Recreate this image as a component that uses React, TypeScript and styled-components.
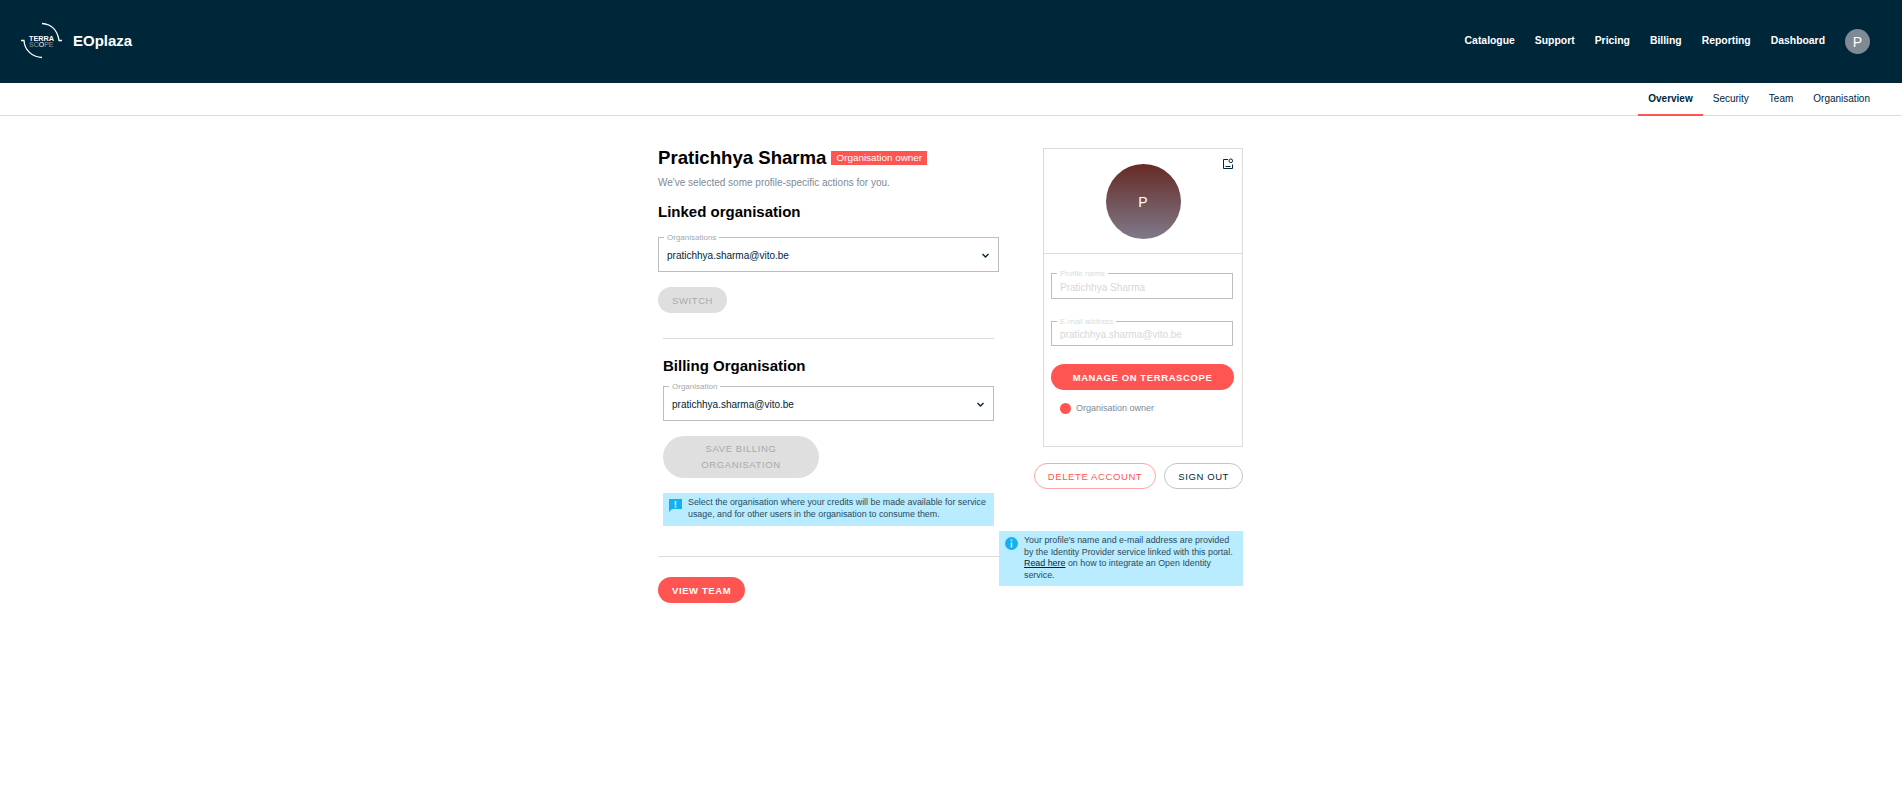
import styled, { createGlobalStyle } from 'styled-components'

const GlobalStyle = createGlobalStyle`
	* {
		box-sizing: border-box;
	}

	body {
		margin: 0;
		background: #fff;
		font-family: 'Liberation Sans', Arial, sans-serif;
		color: #00263a;
	}
`

const Header = styled.header`
	display: flex;
	justify-content: space-between;
	align-items: center;
	height: 83px;
	padding: 0 32px 0 20px;
	background: #00263a;
	color: #fff;
`

const Brand = styled.div`
	display: flex;
	align-items: center;
	gap: 7px;
`

const BrandName = styled.span`
	margin-bottom: 2px;
	font-size: 15px;
	font-weight: 700;
`

const MainNav = styled.nav`
	display: flex;
	align-items: center;
	gap: 20px;
`

const NavLink = styled.a`
	margin-bottom: 2px;
	font-size: 10.4px;
	font-weight: 700;
`

const UserBadge = styled.div`
	display: flex;
	justify-content: center;
	align-items: center;
	width: 25px;
	height: 25px;
	border-radius: 50%;
	background: #808a94;
	font-size: 14px;
`

const SubNav = styled.nav`
	display: flex;
	justify-content: flex-end;
	height: 33px;
	padding-right: 22px;
	border-bottom: 1px solid #dcdcdc;
`

const Tab = styled.a<{ $active?: boolean }>`
	display: flex;
	align-items: center;
	height: 33px;
	padding: 0 10px;
	font-size: 10px;
	font-weight: ${({ $active }) => ($active ? 700 : 400)};
	border-bottom: 2px solid ${({ $active }) => ($active ? '#ff5552' : 'transparent')};
`

const Main = styled.main`
	display: flex;
	justify-content: center;
	align-items: flex-start;
	padding: 32px 1px 0 0;
`

const LeftColumn = styled.section`
	width: 341px;
`

const RightColumn = styled.aside`
	display: flex;
	flex-direction: column;
	align-items: flex-end;
	width: 244px;
`

const TitleRow = styled.div`
	display: flex;
	align-items: center;
	gap: 5px;
	height: 20px;
`

const Title = styled.h1`
	margin: 0;
	font-size: 18.6px;
	font-weight: 700;
	color: #000;
`

const RoleBadge = styled.span`
	padding: 1px 5px;
	background: #ff5552;
	color: #fff;
	font-size: 9.9px;
	line-height: 12px;
`

const Lead = styled.p`
	margin: 9px 0 0;
	font-size: 10px;
	line-height: 12px;
	color: #808a94;
`

const SectionTitle = styled.h2<{ $top: number }>`
	margin: ${({ $top }) => $top}px 0 0;
	font-size: 15px;
	line-height: 18px;
	font-weight: 700;
	color: #000;
`

const Inset = styled.div`
	padding: 0 5px;
`

const Field = styled.fieldset<{ $top: number; $height: number; $disabled?: boolean }>`
	display: flex;
	align-items: center;
	justify-content: space-between;
	height: ${({ $height }) => $height}px;
	margin: ${({ $top }) => $top}px 0 0;
	padding: 0 8px;
	border: 1px solid #bdbdbd;
	font-size: 10px;
	color: ${({ $disabled }) => ($disabled ? '#d8d8d8' : '#00263a')};
`

const FieldLegend = styled.legend<{ $disabled?: boolean }>`
	padding: 0 3px;
	margin-left: -3px;
	font-size: 8px;
	line-height: 5px;
	color: ${({ $disabled }) => ($disabled ? '#dcdcdc' : '#a3a9af')};
`

const Chevron = styled.svg`
	width: 7px;
	height: 5px;
	margin-right: 1px;
	fill: none;
	stroke: #00263a;
	stroke-width: 1.4;
`

const PillButton = styled.button<{ $variant: 'primary' | 'disabled' | 'danger' | 'outline'; $top?: number }>`
	display: block;
	min-height: 26px;
	margin-top: ${({ $top }) => $top ?? 0}px;
	padding: 0 ${({ $variant }) => ($variant === 'danger' || $variant === 'outline' ? 13 : 14)}px;
	border-radius: 13px;
	font-family: inherit;
	font-size: 9.5px;
	font-weight: ${({ $variant }) => ($variant === 'primary' ? 700 : 400)};
	letter-spacing: 0.6px;
	text-transform: uppercase;
	background: ${({ $variant }) =>
		$variant === 'primary' ? '#ff5552' : $variant === 'disabled' ? '#dfdfdf' : '#fff'};
	color: ${({ $variant }) =>
		$variant === 'primary'
			? '#fff'
			: $variant === 'disabled'
				? '#a9a9a9'
				: $variant === 'danger'
					? '#ff5552'
					: '#00263a'};
	border: ${({ $variant }) =>
		$variant === 'danger'
			? '1px solid #ffa5a3'
			: $variant === 'outline'
				? '1px solid #c4c4c4'
				: 'none'};
`

const SaveButton = styled(PillButton)`
	width: 156px;
	height: 42px;
	border-radius: 21px;
	line-height: 16px;
`

const Divider = styled.hr<{ $top: number }>`
	height: 1px;
	margin: ${({ $top }) => $top}px 0 0;
	border: 0;
	background: #dcdcdc;
`

const Note = styled.div<{ $top: number }>`
	display: flex;
	gap: 6px;
	margin-top: ${({ $top }) => $top}px;
	background: #b9ecff;
	font-size: 8.9px;
	line-height: 11.5px;
	color: #2b4a5c;
`

const BillingNote = styled(Note)`
	height: 33px;
	padding: 4px 3px 4px 6px;
`

const IdentityNote = styled(Note)`
	width: 244px;
	height: 55px;
	padding: 4px 5px 4px 6px;
`

const NoteIcon = styled.svg`
	flex: none;
	width: 13px;
	height: 13px;
	margin-top: 2px;
	fill: #16b0f0;
`

const NoteLink = styled.a`
	color: #00263a;
	text-decoration: underline;
`

const ProfileCard = styled.div`
	width: 200px;
	height: 299px;
	border: 1px solid #dcdcdc;
`

const AvatarArea = styled.div`
	position: relative;
	display: flex;
	justify-content: center;
	height: 105px;
	padding-top: 15px;
	border-bottom: 1px solid #dcdcdc;
`

const Avatar = styled.div`
	display: flex;
	justify-content: center;
	align-items: center;
	width: 75px;
	height: 75px;
	border-radius: 50%;
	background: linear-gradient(#662a26, #7f7a8a);
	color: #fff;
	font-size: 14px;
`

const UploadIcon = styled.svg`
	position: absolute;
	top: 9px;
	right: 8px;
	width: 11px;
	height: 11px;
	fill: none;
	stroke: #00263a;
`

const CardBody = styled.div`
	padding: 17px 9px 0 7px;
`

const WideButton = styled(PillButton)`
	width: 183px;
	margin-top: 18px;
`

const RoleLine = styled.div`
	display: flex;
	align-items: center;
	gap: 5px;
	margin: 13px 0 0 9px;
	font-size: 9px;
	line-height: 11px;
	color: #808a94;
`

const RoleDot = styled.span`
	width: 11px;
	height: 11px;
	border-radius: 50%;
	background: #ff5552;
`

const AccountActions = styled.div`
	display: flex;
	gap: 8px;
	margin-top: 16px;
`

function SelectField({ label, top }: { label: string; top: number }) {
	return (
		<Field $top={top} $height={37}>
			<FieldLegend>{label}</FieldLegend>
			pratichhya.sharma@vito.be
			<Chevron viewBox="0 0 7 5">
				<path d="M.5 1l3 3 3-3" />
			</Chevron>
		</Field>
	)
}

function Logo() {
	return (
		<svg width="46" height="40" viewBox="0 0 46 40" fill="none">
			<path d="M22 1.5C31 2 37.5 8 39 18.5H42" stroke="#fff" strokeWidth="1.3" />
			<path d="M1 18.5H4C4.5 28 12 35 22 35.5" stroke="#fff" strokeWidth="1.3" />
			<text x="9" y="18.5" fill="#fff" fontSize="7.3" fontWeight="700" fontFamily="Liberation Sans">
				TERRA
			</text>
			<text x="9" y="25" fill="#8d9ca6" fontSize="7" fontFamily="Liberation Sans">
				SC<tspan fill="#fff">O</tspan>PE
			</text>
		</svg>
	)
}

export default function App() {
	return (
		<>
			<GlobalStyle />
			<Header>
				<Brand>
					<Logo />
					<BrandName>EOplaza</BrandName>
				</Brand>
				<MainNav>
					<NavLink>Catalogue</NavLink>
					<NavLink>Support</NavLink>
					<NavLink>Pricing</NavLink>
					<NavLink>Billing</NavLink>
					<NavLink>Reporting</NavLink>
					<NavLink>Dashboard</NavLink>
					<UserBadge>P</UserBadge>
				</MainNav>
			</Header>
			<SubNav>
				<Tab $active>Overview</Tab>
				<Tab>Security</Tab>
				<Tab>Team</Tab>
				<Tab>Organisation</Tab>
			</SubNav>
			<Main>
				<LeftColumn>
					<TitleRow>
						<Title>Pratichhya Sharma</Title>
						<RoleBadge>Organisation owner</RoleBadge>
					</TitleRow>
					<Lead>We've selected some profile-specific actions for you.</Lead>
					<SectionTitle $top={14}>Linked organisation</SectionTitle>
					<SelectField label="Organisations" top={14} />
					<PillButton $variant="disabled" $top={15}>
						Switch
					</PillButton>
					<Inset>
						<Divider $top={25} />
						<SectionTitle $top={18}>Billing Organisation</SectionTitle>
						<SelectField label="Organisation" top={9} />
						<SaveButton $variant="disabled" $top={15}>
							Save billing organisation
						</SaveButton>
						<BillingNote $top={15}>
							<NoteIcon viewBox="0 0 13 13">
								<path d="M0 0h13v10H3l-3 3zM5.7 2v4.4h1.6V2zm0 5.2v1.6h1.6V7.2z" fillRule="evenodd" />
							</NoteIcon>
							<span>
								Select the organisation where your credits will be made available for service usage, and
								for other users in the organisation to consume them.
							</span>
						</BillingNote>
					</Inset>
					<Divider $top={30} />
					<PillButton $variant="primary" $top={20}>
						View team
					</PillButton>
				</LeftColumn>
				<RightColumn>
					<ProfileCard>
						<AvatarArea>
							<Avatar>P</Avatar>
							<UploadIcon viewBox="0 0 11 11">
								<path d="M5 1.5H.5v9h9V6.5M2.5 8.5h5" />
								<circle cx="7.8" cy="2.8" r="1.8" />
							</UploadIcon>
						</AvatarArea>
						<CardBody>
							<Field $top={0} $height={28} $disabled>
								<FieldLegend $disabled>Profile name</FieldLegend>
								Pratichhya Sharma
							</Field>
							<Field $top={20} $height={27} $disabled>
								<FieldLegend $disabled>E-mail address</FieldLegend>
								pratichhya.sharma@vito.be
							</Field>
							<WideButton $variant="primary">Manage on Terrascope</WideButton>
							<RoleLine>
								<RoleDot />
								Organisation owner
							</RoleLine>
						</CardBody>
					</ProfileCard>
					<AccountActions>
						<PillButton $variant="danger">Delete account</PillButton>
						<PillButton $variant="outline">Sign out</PillButton>
					</AccountActions>
					<IdentityNote $top={42}>
						<NoteIcon viewBox="0 0 13 13">
							<path
								d="M6.5 0a6.5 6.5 0 1 1 0 13 6.5 6.5 0 0 1 0-13zM5.7 2.6v1.6h1.6V2.6zm0 2.8v5h1.6v-5z"
								fillRule="evenodd"
							/>
						</NoteIcon>
						<span>
							Your profile's name and e-mail address are provided by the Identity Provider service linked
							with this portal. <NoteLink>Read here</NoteLink> on how to integrate an Open Identity service.
						</span>
					</IdentityNote>
				</RightColumn>
			</Main>
		</>
	)
}
